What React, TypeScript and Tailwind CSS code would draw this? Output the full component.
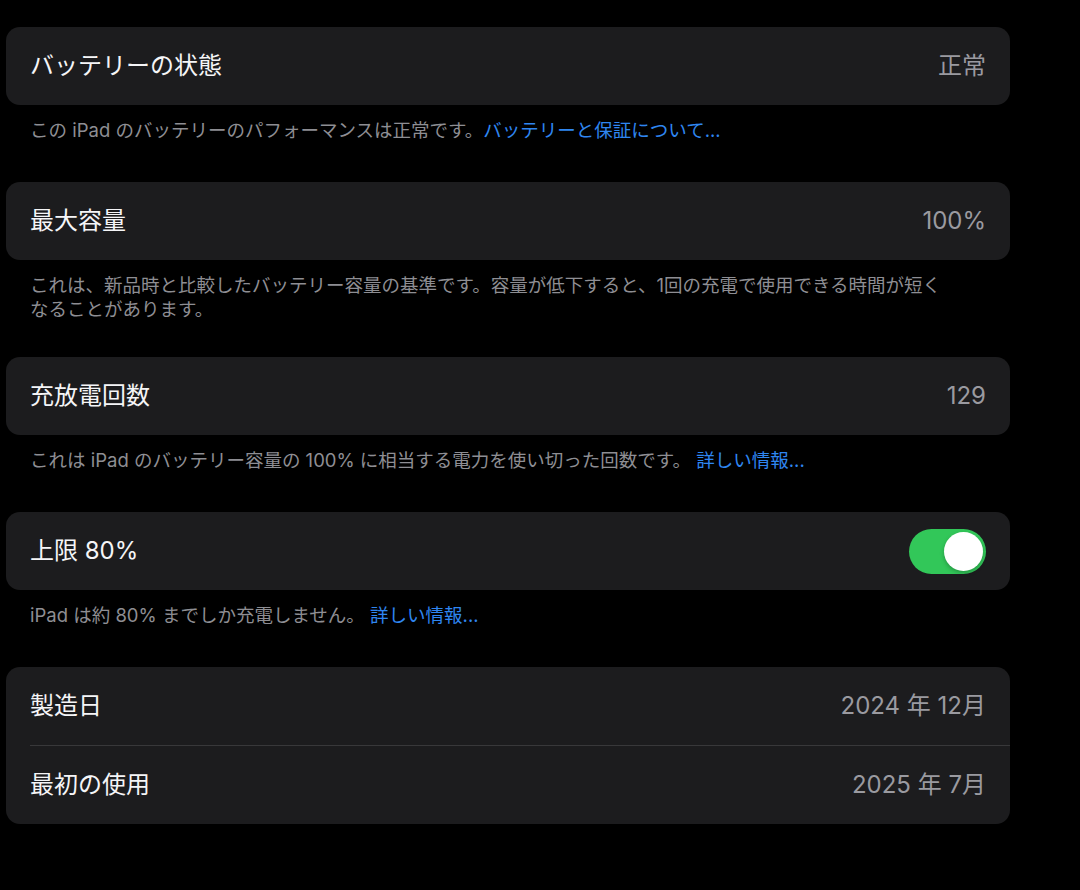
import React from "react";

const font = { fontFamily: '"Inter", "Noto Sans CJK JP", sans-serif' };

function Card({ children }: { children: React.ReactNode }) {
  return <div className="rounded-[14px] bg-[#1c1c1e]">{children}</div>;
}

function Row({ label, value, right }: { label: string; value?: string; right?: React.ReactNode }) {
  return (
    <div className="flex h-[78px] items-center justify-between px-6">
      <span className="text-[24px] text-[#f5f5f7]">{label}</span>
      {right ?? <span className="text-[24px] text-[#9a9aa0]">{value}</span>}
    </div>
  );
}

function Footer({ children, tight }: { children: React.ReactNode; tight?: boolean }) {
  return (
    <p
      className={
        tight
          ? "px-6 pt-[13px] pb-[36px] text-[18.5px] leading-6 text-[#8e8e93]"
          : "px-6 pt-[13px] pb-[40px] text-[18.5px] leading-6 text-[#8e8e93]"
      }
    >
      {children}
    </p>
  );
}

function Link({ children }: { children: React.ReactNode }) {
  return <span className="text-[#2f86f0]">{children}</span>;
}

function Toggle() {
  return (
    <div className="flex h-[45px] w-[77px] items-center justify-end rounded-full bg-[#32c759] px-[3px]">
      <div className="h-[39px] w-[39px] rounded-full bg-white shadow-[0_2px_4px_rgba(0,0,0,0.25)]" />
    </div>
  );
}

export default function App() {
  return (
    <div className="min-h-[890px] w-[1080px] bg-black pt-[27px]" style={font}>
      <div className="ml-[6px] w-[1004px]">
        <Card>
          <Row label="バッテリーの状態" value="正常" />
        </Card>
        <Footer>
          この iPad のバッテリーのパフォーマンスは正常です。<Link>バッテリーと保証について...</Link>
        </Footer>

        <Card>
          <Row label="最大容量" value="100%" />
        </Card>
        <Footer tight>
          これは、新品時と比較したバッテリー容量の基準です。容量が低下すると、1回の充電で使用できる時間が短く
          <br />
          なることがあります。
        </Footer>

        <Card>
          <Row label="充放電回数" value="129" />
        </Card>
        <Footer>
          これは iPad のバッテリー容量の 100% に相当する電力を使い切った回数です。 <Link>詳しい情報...</Link>
        </Footer>

        <Card>
          <Row label="上限 80%" right={<Toggle />} />
        </Card>
        <Footer>
          iPad は約 80% までしか充電しません。 <Link>詳しい情報...</Link>
        </Footer>

        <Card>
          <Row label="製造日" value="2024 年 12月" />
          <div className="ml-6 h-px bg-[#38383a]" />
          <Row label="最初の使用" value="2025 年 7月" />
        </Card>
      </div>
    </div>
  );
}
